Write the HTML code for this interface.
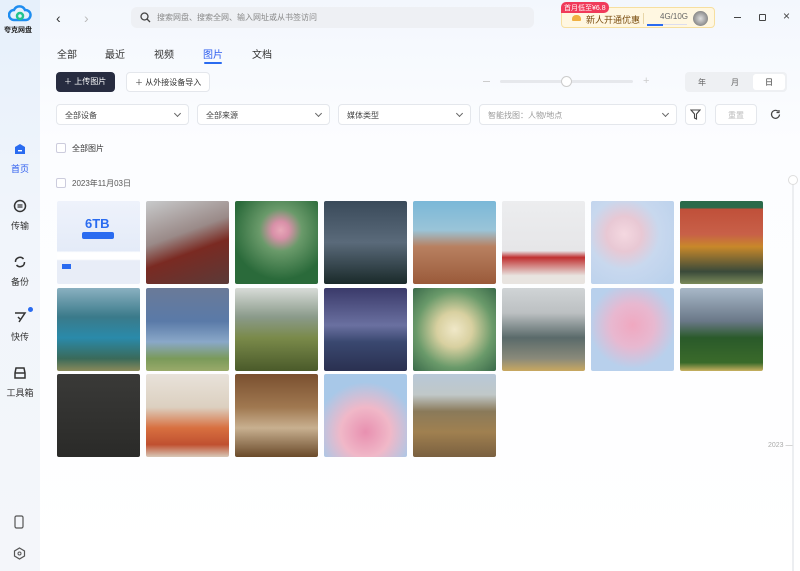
<!DOCTYPE html>
<html><head><meta charset="utf-8"><style>
*{margin:0;padding:0;box-sizing:border-box}
body{width:800px;height:571px;overflow:hidden;font-family:"Liberation Sans","Noto Sans CJK SC",sans-serif;background:#fbfcfe;position:relative;color:#222}
.side{position:absolute;left:0;top:0;width:40px;height:571px;background:linear-gradient(180deg,#e6f0fb,#f1f5fb 40%,#f4f6fa)}
.main{position:absolute;left:40px;top:0;right:0;bottom:0;background:linear-gradient(180deg,#f3f7fd,#fcfdff 25%,#fff)}
.a{position:absolute}
.nav{position:absolute;left:0;width:40px;text-align:center;font-size:9px;color:#333}
.nav svg{display:block;margin:0 auto 6px}
.tab{position:absolute;top:46px;font-size:10px;color:#333}
.sel{position:absolute;height:21px;border:1px solid #e4e7ec;border-radius:4px;background:#fff;font-size:8px;color:#444;padding:5px 8px}
.sel:after{content:"";position:absolute;right:8px;top:6px;width:4px;height:4px;border-right:1px solid #666;border-bottom:1px solid #666;transform:rotate(45deg)}
.t{position:absolute;width:83px;height:83px;border-radius:2px}
.cb{position:absolute;width:10px;height:10px;border:1px solid #ccd;border-radius:2px;background:#fff}
</style></head><body>
<div class="side"></div>
<div class="main"></div>
<!-- logo -->
<svg class="a" style="left:8px;top:5px" width="24" height="18" viewBox="0 0 24 18"><path d="M6 15a5 5 0 0 1 0-10a6 6 0 0 1 11 0a5 5 0 0 1 1 10z" fill="none" stroke="#1e8df0" stroke-width="2.5"/><circle cx="12" cy="11" r="3" fill="none" stroke="#22c38e" stroke-width="2.5"/></svg>
<div class="a" style="left:4px;top:25px;font-size:7px;font-weight:bold;color:#222">夸克网盘</div>
<div class="nav" style="top:142px;color:#2a5bef"><svg width="14" height="14"><path d="M2 5l5-3 5 3v7H2z" fill="#2a6bf0"/><rect x="5" y="8" width="4" height="1.4" fill="#fff"/></svg>首页</div>
<div class="nav" style="top:199px"><svg width="14" height="14"><circle cx="7" cy="7" r="5.5" fill="none" stroke="#333" stroke-width="1.5"/><path d="M4.5 8h5M9.5 6h-5" stroke="#333" stroke-width="1.2"/></svg>传输</div>
<div class="nav" style="top:255px"><svg width="14" height="14"><path d="M2.5 7a4.5 4.5 0 0 1 8-3M11.5 7a4.5 4.5 0 0 1-8 3" fill="none" stroke="#333" stroke-width="1.5"/></svg>备份</div>
<div class="nav" style="top:310px"><svg width="14" height="14"><path d="M2 3h10L6 12M5 7l2 2" fill="none" stroke="#333" stroke-width="1.5"/></svg>快传</div>
<div class="a" style="left:28px;top:307px;width:5px;height:5px;border-radius:50%;background:#2a6bf0"></div>
<div class="nav" style="top:366px"><svg width="14" height="14"><path d="M3 2h8l1 5v5H2V7z M2 7h10" fill="none" stroke="#333" stroke-width="1.5"/></svg>工具箱</div>
<svg class="a" style="left:13px;top:515px" width="12" height="14"><rect x="2" y="1" width="8" height="12" rx="1.5" fill="none" stroke="#555" stroke-width="1.2"/></svg>
<svg class="a" style="left:13px;top:547px" width="13" height="13"><path d="M6.5 1l5 3v5l-5 3-5-3V4z" fill="none" stroke="#555" stroke-width="1.2"/><circle cx="6.5" cy="6.5" r="1.5" fill="none" stroke="#555"/></svg>
<!-- top bar -->
<div class="a" style="left:56px;top:10px;font-size:14px;color:#333">‹</div>
<div class="a" style="left:84px;top:10px;font-size:14px;color:#bbb">›</div>
<div class="a" style="left:131px;top:7px;width:403px;height:21px;border-radius:6px;background:#eef0f4"></div>
<svg class="a" style="left:140px;top:12px" width="11" height="11"><circle cx="4.5" cy="4.5" r="3.5" fill="none" stroke="#444" stroke-width="1.3"/><path d="M7 7l3 3" stroke="#444" stroke-width="1.3"/></svg>
<div class="a" style="left:157px;top:12px;font-size:8px;color:#888">搜索网盘、搜索全网、输入网址或从书签访问</div>
<div class="a" style="left:561px;top:7px;width:154px;height:21px;border:1px solid #f6dfa0;border-radius:4px;background:#fff7e1"></div>
<div class="a" style="left:561px;top:2px;width:48px;height:11px;background:#f03a5a;border-radius:5px 5px 5px 0;color:#fff;font-size:7px;padding:1px 3px;white-space:nowrap">首月低至¥6.8</div>
<div class="a" style="left:572px;top:15px;width:9px;height:6px;background:#f0b040;border-radius:4px 4px 1px 1px"></div>
<div class="a" style="left:586px;top:13px;font-size:9px;color:#7a4d10">新人开通优惠</div>
<div class="a" style="left:643px;top:13px;width:1px;height:11px;background:#e8d6a8"></div>
<div class="a" style="left:660px;top:12px;font-size:8px;color:#666">4G/10G</div>
<div class="a" style="left:647px;top:24px;width:40px;height:1px;background:#dde"></div>
<div class="a" style="left:647px;top:24px;width:16px;height:1.5px;background:#2a6bf0"></div>
<div class="a" style="left:693px;top:11px;width:15px;height:15px;border-radius:50%;background:radial-gradient(#ddd,#666)"></div>
<div class="a" style="left:734px;top:17px;width:7px;height:1px;background:#444"></div>
<div class="a" style="left:759px;top:14px;width:7px;height:7px;border:1.3px solid #444;border-radius:1px"></div>
<div class="a" style="left:783px;top:9px;font-size:12px;color:#444">×</div>
<!-- tabs -->
<div class="tab" style="left:57px">全部</div>
<div class="tab" style="left:105px">最近</div>
<div class="tab" style="left:154px">视频</div>
<div class="tab" style="left:203px;color:#2a5bef">图片</div>
<div class="a" style="left:204px;top:62px;width:18px;height:2px;background:#2a6bf0;border-radius:1px"></div>
<div class="tab" style="left:252px">文档</div>
<!-- buttons -->
<div class="a" style="left:56px;top:72px;width:59px;height:20px;background:#272c40;border-radius:4px;color:#fff;font-size:8px;padding:4px 0 0 8px">＋ 上传图片</div>
<div class="a" style="left:126px;top:72px;width:84px;height:20px;background:#fff;border:1px solid #e4e7ec;border-radius:4px;font-size:8px;color:#333;padding:4px 0 0 8px">＋ 从外接设备导入</div>
<div class="a" style="left:483px;top:81px;width:7px;height:1px;background:#ccc"></div>
<div class="a" style="left:500px;top:80px;width:133px;height:3px;border-radius:2px;background:#e6e8ec"></div>
<div class="a" style="left:561px;top:76px;width:11px;height:11px;border-radius:50%;background:#fff;border:1px solid #ccc"></div>
<div class="a" style="left:643px;top:75px;font-size:11px;color:#ccc">+</div>
<div class="a" style="left:685px;top:72px;width:102px;height:20px;background:#eef0f3;border-radius:4px"></div>
<div class="a" style="left:753px;top:74px;width:32px;height:16px;background:#fff;border-radius:3px"></div>
<div class="a" style="left:698px;top:77px;font-size:8px;color:#666">年</div>
<div class="a" style="left:731px;top:77px;font-size:8px;color:#666">月</div>
<div class="a" style="left:765px;top:77px;font-size:8px;color:#333">日</div>
<!-- filters -->
<div class="sel" style="left:56px;top:104px;width:133px">全部设备</div>
<div class="sel" style="left:197px;top:104px;width:133px">全部来源</div>
<div class="sel" style="left:338px;top:104px;width:133px">媒体类型</div>
<div class="sel" style="left:479px;top:104px;width:198px;color:#999">智能找图：人物/地点</div>
<div class="a" style="left:685px;top:104px;width:21px;height:21px;border:1px solid #e4e7ec;border-radius:4px;background:#fff"></div>
<svg class="a" style="left:690px;top:109px" width="11" height="11"><path d="M1 1h9L6.5 5v5L4.5 9V5z" fill="none" stroke="#444" stroke-width="1.1"/></svg>
<div class="a" style="left:715px;top:104px;width:42px;height:21px;border:1px solid #e4e7ec;border-radius:4px;background:#fff;font-size:8px;color:#bbb;text-align:center;padding-top:5px">重置</div>
<svg class="a" style="left:770px;top:109px" width="11" height="11"><path d="M9.5 5.5a4 4 0 1 1-1.5-3.3M9 1v2.5H6.5" fill="none" stroke="#444" stroke-width="1.2"/></svg>
<div class="cb" style="left:56px;top:143px"></div>
<div class="a" style="left:72px;top:143px;font-size:8px;color:#333">全部图片</div>
<div class="cb" style="left:56px;top:178px"></div>
<div class="a" style="left:72px;top:178px;font-size:8px;color:#555">2023年11月03日</div>
<!-- timeline -->
<div class="a" style="left:792px;top:180px;width:2px;height:391px;background:#eceef1"></div>
<div class="a" style="left:788px;top:175px;width:10px;height:10px;border-radius:50%;border:1px solid #ddd;background:#fff"></div>
<div class="a" style="left:768px;top:442px;font-size:7px;color:#aaa">2023 —</div>
<!-- tiles row1 -->
<div class="t" style="left:57px;top:201px;background:linear-gradient(180deg,#eef2fb 0,#e4ebf8 60%,#fff 62%,#fff 70%,#e8edf7 72%)"></div>
<div class="a" style="left:85px;top:216px;width:28px;height:14px;color:#2a6bf0;font-weight:bold;font-size:13px">6TB</div>
<div class="a" style="left:82px;top:232px;width:32px;height:7px;background:#2a6bf0;border-radius:2px"></div>
<div class="a" style="left:62px;top:264px;width:9px;height:5px;background:#2a6bf0"></div>
<div class="t" style="left:146px;top:201px;background:linear-gradient(160deg,#c8cacb 0,#9a8a88 40%,#7a2a22 60%,#5a3a38)"></div>
<div class="t" style="left:235px;top:201px;background:radial-gradient(circle at 55% 35%,#e8a8b8 0,#d890a8 12%,#6a9a6a 30%,#2a6a3a 70%)"></div>
<div class="t" style="left:324px;top:201px;background:linear-gradient(180deg,#3a4a5a,#5a6a7a 50%,#1a2a2a)"></div>
<div class="t" style="left:413px;top:201px;background:linear-gradient(180deg,#7ab8d8 0,#9ac4d8 35%,#b88060 55%,#9a5a3a)"></div>
<div class="t" style="left:502px;top:201px;background:linear-gradient(180deg,#ecedef 0,#e6e6e8 60%,#c03030 68%,#e8e4e0 90%)"></div>
<div class="t" style="left:591px;top:201px;background:radial-gradient(circle at 40% 40%,#f4d8e0 0,#e8c8d4 25%,#c8d8ee 50%,#b8d0ec)"></div>
<div class="t" style="left:680px;top:201px;background:linear-gradient(180deg,#2a6a4a 0,#2a6a4a 8%,#c0503a 10%,#c86048 40%,#c8882a 55%,#3a4a3a 85%,#7a8a5a)"></div>
<!-- row2 -->
<div class="t" style="left:57px;top:288px;background:linear-gradient(180deg,#8ab0c0,#3a7a8a 35%,#2a8aaa 60%,#3a6a5a 85%,#8a8a5a)"></div>
<div class="t" style="left:146px;top:288px;background:linear-gradient(180deg,#6a7a98,#5a7aa8 40%,#8aa8c8 65%,#7a9a5a 85%,#9aaa6a)"></div>
<div class="t" style="left:235px;top:288px;background:linear-gradient(180deg,#d8dcd8,#8a9a8a 35%,#7a8a4a 60%,#4a5a2a)"></div>
<div class="t" style="left:324px;top:288px;background:linear-gradient(180deg,#3a3a6a,#6a70a0 45%,#3a4870 65%,#2a3050)"></div>
<div class="t" style="left:413px;top:288px;background:radial-gradient(circle at 50% 50%,#f0e8c8 0,#d8d0a0 30%,#6a9a6a 65%,#3a6a4a)"></div>
<div class="t" style="left:502px;top:288px;background:linear-gradient(180deg,#d0d4d6,#bcc0c2 30%,#5a6a6a 60%,#8a8a7a 85%,#c8a860)"></div>
<div class="t" style="left:591px;top:288px;background:radial-gradient(circle at 50% 45%,#f0a8c0 0,#e8b8d0 35%,#b8d0ec 70%)"></div>
<div class="t" style="left:680px;top:288px;background:linear-gradient(180deg,#a8b8c8,#6a7888 40%,#2a5a2a 60%,#3a6a2a 90%,#c8b060)"></div>
<!-- row3 -->
<div class="t" style="left:57px;top:374px;background:linear-gradient(180deg,#3a3a38,#2a2a28)"></div>
<div class="t" style="left:146px;top:374px;background:linear-gradient(180deg,#e8e2da,#dcd0c0 40%,#d87040 65%,#c05030 85%,#d8c8b8)"></div>
<div class="t" style="left:235px;top:374px;background:linear-gradient(180deg,#7a5030,#a07850 40%,#c8b090 65%,#6a4a2a)"></div>
<div class="t" style="left:324px;top:374px;background:radial-gradient(circle at 50% 70%,#e890b0 0,#f0b8c8 35%,#a8c8e8 70%)"></div>
<div class="t" style="left:413px;top:374px;background:linear-gradient(180deg,#b8c8d8,#c0c8c8 25%,#8a7a5a 45%,#a08050 70%,#7a6040)"></div>
</body></html>
